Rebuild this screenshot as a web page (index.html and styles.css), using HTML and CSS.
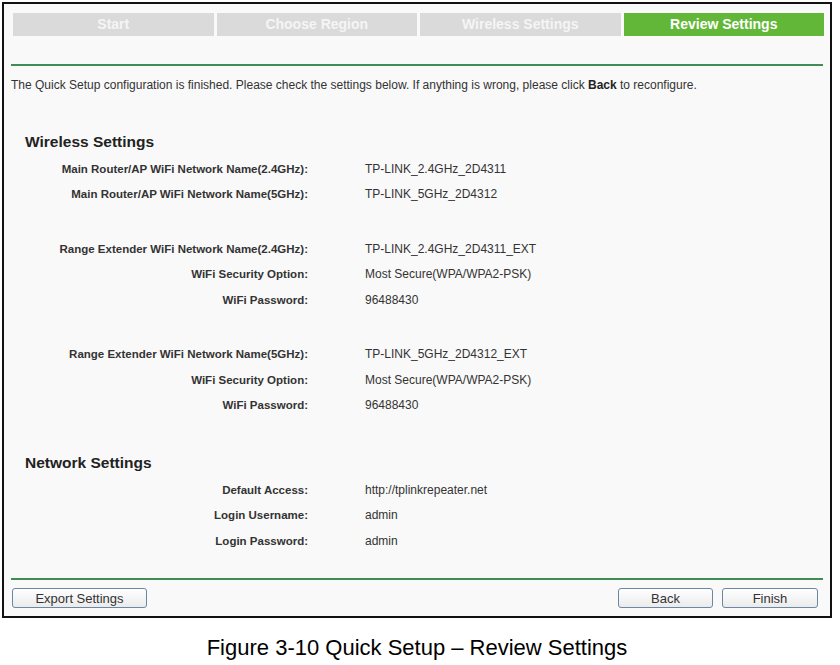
FILE: index.html
```html
<!DOCTYPE html>
<html>
<head>
<meta charset="utf-8">
<title>Quick Setup - Review Settings</title>
<link rel="stylesheet" href="styles.css">
</head>
<body>
<div class="frame">
  <div class="tabs">
    <div class="tab">Start</div>
    <div class="tab">Choose Region</div>
    <div class="tab">Wireless Settings</div>
    <div class="tab active">Review Settings</div>
  </div>
  <div class="rule top-rule"></div>
  <p class="intro">The Quick Setup configuration is finished. Please check the settings below. If anything is wrong, please click <b>Back</b> to reconfigure.</p>

  <h2 class="section-title">Wireless Settings</h2>
  <div class="group">
    <div class="row"><span class="label">Main Router/AP WiFi Network Name(2.4GHz):</span><span class="value">TP-LINK_2.4GHz_2D4311</span></div>
    <div class="row"><span class="label">Main Router/AP WiFi Network Name(5GHz):</span><span class="value">TP-LINK_5GHz_2D4312</span></div>
  </div>
  <div class="group spaced">
    <div class="row"><span class="label">Range Extender WiFi Network Name(2.4GHz):</span><span class="value">TP-LINK_2.4GHz_2D4311_EXT</span></div>
    <div class="row"><span class="label">WiFi Security Option:</span><span class="value">Most Secure(WPA/WPA2-PSK)</span></div>
    <div class="row"><span class="label">WiFi Password:</span><span class="value">96488430</span></div>
  </div>
  <div class="group spaced">
    <div class="row"><span class="label">Range Extender WiFi Network Name(5GHz):</span><span class="value">TP-LINK_5GHz_2D4312_EXT</span></div>
    <div class="row"><span class="label">WiFi Security Option:</span><span class="value">Most Secure(WPA/WPA2-PSK)</span></div>
    <div class="row"><span class="label">WiFi Password:</span><span class="value">96488430</span></div>
  </div>

  <h2 class="section-title net">Network Settings</h2>
  <div class="group">
    <div class="row"><span class="label">Default Access:</span><span class="value">http://tplinkrepeater.net</span></div>
    <div class="row"><span class="label">Login Username:</span><span class="value">admin</span></div>
    <div class="row"><span class="label">Login Password:</span><span class="value">admin</span></div>
  </div>

  <div class="rule bottom-rule"></div>
  <div class="buttons">
    <button class="btn export">Export Settings</button>
    <div class="spacer"></div>
    <button class="btn back">Back</button>
    <button class="btn finish">Finish</button>
  </div>
</div>
<p class="caption">Figure 3-10 Quick Setup – Review Settings</p>
</body>
</html>
```

FILE: styles.css
```css
html, body {
  margin: 0;
  padding: 0;
  background: #ffffff;
  font-family: "Liberation Sans", Arial, sans-serif;
}

.frame {
  box-sizing: border-box;
  margin: 2px 0 0 2px;
  width: 830px;
  height: 616px;
  border: 2px solid #111;
  background: #f9f9f9;
  padding: 9px 0 0 0;
  display: flex;
  flex-direction: column;
}

.tabs {
  display: flex;
  gap: 3px;
  margin: 0 6px 0 9px;
}

.tab {
  flex: 1;
  height: 23px;
  line-height: 23px;
  background: #dadada;
  color: #f5f5f5;
  font-weight: bold;
  font-size: 14px;
  text-align: center;
}

.tab.active {
  background: #62b738;
  color: #ffffff;
}

.rule {
  height: 2px;
  background: #3f8d55;
  margin: 0 7px;
}

.top-rule {
  margin-top: 28px;
}

.intro {
  margin: 12px 0 0 7px;
  font-size: 12px;
  line-height: 14px;
  color: #333;
}

.intro b {
  color: #222;
}

.section-title {
  margin: 40px 0 0 21px;
  font-size: 15.5px;
  line-height: 19px;
  font-weight: bold;
  color: #222;
}

.section-title.net {
  margin-top: 35px;
}

.group {
  margin-top: 5px;
}

.group.spaced {
  margin-top: 29px;
}

.row {
  display: grid;
  grid-template-columns: 304px 1fr;
  column-gap: 57px;
  height: 25.5px;
  align-items: center;
  font-size: 12px;
  color: #333;
}

.label {
  text-align: right;
  font-weight: bold;
  font-size: 11.5px;
}

.bottom-rule {
  margin-top: auto;
}

.buttons {
  display: flex;
  gap: 9px;
  margin: 8px 0 8px 0;
  padding: 0 12px 0 8px;
}

.spacer {
  flex: 1;
}

.btn {
  box-sizing: border-box;
  height: 20px;
  border: 1px solid #6d86a3;
  border-radius: 3px;
  background: linear-gradient(#ffffff, #ebebeb);
  font-family: "Liberation Sans", Arial, sans-serif;
  font-size: 13px;
  color: #333;
  padding: 0;
}

.btn.export { width: 135px; }
.btn.back { width: 95px; }
.btn.finish { width: 96px; }

.caption {
  margin: 17px 0 0 0;
  text-align: center;
  font-size: 22px;
  line-height: 25px;
  color: #000;
  padding-right: 6px;
}
```
